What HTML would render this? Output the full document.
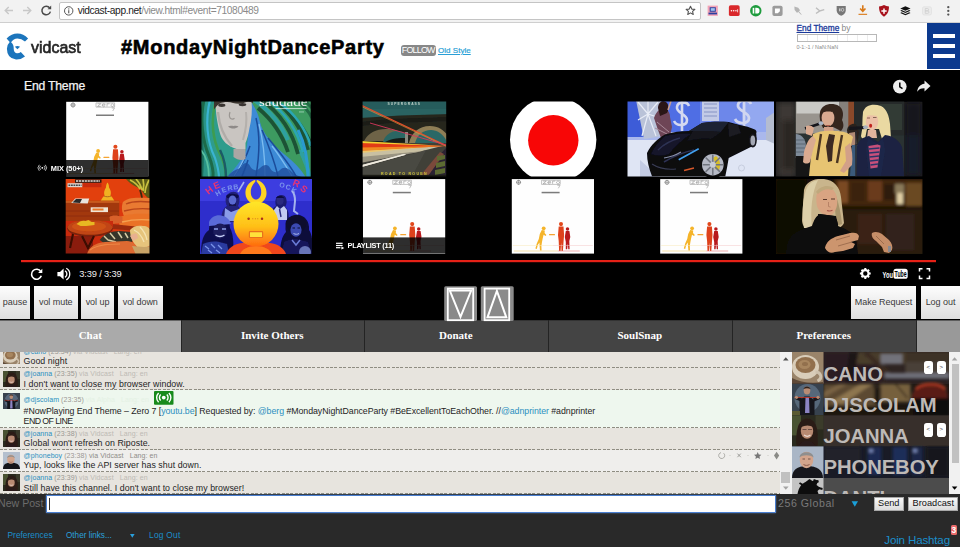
<!DOCTYPE html>
<html>
<head>
<meta charset="utf-8">
<style>
*{box-sizing:border-box;margin:0;padding:0}
html,body{width:960px;height:547px;overflow:hidden;background:#292929;font-family:"Liberation Sans",sans-serif;}
.abs{position:absolute}
svg{display:block;overflow:visible}
#root{position:absolute;left:0;top:0;width:960px;height:547px;overflow:hidden;background:#292929}
/* browser toolbar */
#tb{left:0;top:0;width:960px;height:23px;background:#f2f2f2;border-bottom:1px solid #cfcfcf}
#url{left:59px;top:2px;width:642px;height:18px;background:#fff;border:1px solid #c4c4c4;border-radius:2px}
#urlt{left:77.700px;top:2.500px;font-size:10.200px;line-height:16px;color:#8a8a8a;white-space:nowrap;letter-spacing:-.37px}
#urlt b{font-weight:normal;color:#222}
/* header */
#hd{left:0;top:23px;width:960px;height:47px;background:#fff}
#title{left:121px;top:34px;font-weight:bold;font-size:20px;line-height:26px;color:#000;white-space:nowrap;letter-spacing:.72px;-webkit-text-stroke:.6px #000}
#vid{left:0;top:70px;width:960px;height:250px;background:#000}
.tab{top:320px;height:32px;background:#444;color:#fff;font-family:"Liberation Serif",serif;font-weight:bold;font-size:11px;line-height:31.500px;text-align:center}
.btn{top:286px;height:33px;background:linear-gradient(#fdfdfd,#dedede);color:#3a3a3a;font-size:9px;line-height:33px;text-align:center;white-space:nowrap;letter-spacing:-.05px}
</style>
</head>
<body>
<div id="root">
<!-- ===== browser toolbar ===== -->
<div id="tb" class="abs"></div>
<svg class="abs" style="left:0;top:0" width="60" height="23" viewBox="0 0 60 23">
 <g fill="none" stroke="#c8c8c8" stroke-width="1.4">
  <path d="M13 10.5H5.2M8.7 7L5.2 10.5L8.7 14"/>
  <path d="M23 10.5H30.8M27.3 7L30.8 10.5L27.3 14"/>
 </g>
 <path d="M49.700 7.900A4.300 4.300 0 1 0 50.400 11.600" fill="none" stroke="#4a4a4a" stroke-width="1.500"/>
 <path d="M51.200 5.600V9.300H47.500Z" fill="#4a4a4a"/>
</svg>
<div id="url" class="abs"></div>
<svg class="abs" style="left:63px;top:5px" width="12" height="12" viewBox="0 0 12 12"><circle cx="5.700" cy="5.900" r="4.200" fill="none" stroke="#555" stroke-width="1"/><rect x="5.200" y="5.200" width="1.100" height="3.100" fill="#555"/><rect x="5.200" y="3.400" width="1.100" height="1.100" fill="#555"/></svg>
<div id="urlt" class="abs"><b>vidcast-app.net</b>/view.html#event=71080489</div>
<!-- star -->
<svg class="abs" style="left:685.300px;top:5.200px" width="11" height="11" viewBox="0 0 14 14"><path d="M7 1.6l1.65 3.6 3.9.4-2.9 2.6.85 3.8L7 10l-3.5 2 .85-3.8-2.9-2.6 3.9-.4z" fill="none" stroke="#555" stroke-width="1.400" stroke-linejoin="round"/></svg>
<!-- extension icons -->
<svg class="abs" style="left:704px;top:2px" width="256" height="19" viewBox="704 2 256 19">
 <g transform="translate(712.700 10.700) scale(.82) translate(-712.700 -10.700)"><rect x="706.500" y="4.500" width="12.500" height="12.500" fill="#f3a4b6"/><rect x="709" y="6.500" width="7.500" height="5.500" fill="#2a3fa0"/><rect x="710.300" y="7.600" width="5" height="3.200" fill="#9fc4ee"/><rect x="707.600" y="13" width="10.400" height="2.200" fill="#2a3fa0"/></g>
 <g transform="translate(734.300 10.700) scale(.86) translate(-734.300 -10.700)"><rect x="728" y="4.500" width="12.500" height="12.500" rx="2" fill="#d9282b"/><circle cx="731" cy="10.800" r=".9" fill="#fff"/><circle cx="733.600" cy="10.800" r=".9" fill="#fff"/><circle cx="736.200" cy="10.800" r=".9" fill="#fff"/><rect x="737.800" y="9" width=".9" height="3.600" fill="#fff"/></g>
 <g transform="translate(755.800 10.700) scale(.89) translate(-755.800 -10.700)"><circle cx="755.800" cy="10.700" r="6.400" fill="#1d9b3c"/><rect x="752.300" y="7.500" width="1.800" height="6.400" fill="#fff"/><path d="M755.200 7.500h1.600a3.200 3.200 0 0 1 0 6.400h-1.600z" fill="#fff"/></g>
 <g transform="translate(777.500 10.800) scale(.85) translate(-777.500 -10.800)"><rect x="771.500" y="4.800" width="12" height="12" rx="2.200" fill="#9b9b9b"/><path d="M774.500 8h5.800v3.200l-2.400 2.600h-3.400z" fill="#fff"/></g>
 <g transform="translate(798.400 10.700) scale(.92) translate(-798.400 -10.700)"><path d="M794 6.200l4.200 1.200 2.200 3-1.600.7 3.200 3.600-.7.500-3.300-3.400-1 1.400-2.700-3.200z" fill="#b5b5b5"/></g>
 <g transform="translate(820 10.700) scale(.85) translate(-820 -10.700)"><path d="M815.300 7.300l4.500 3.700 5.200-1.600M815.300 14l4.500-3" fill="none" stroke="#bdbdbd" stroke-width="1.700"/></g>
 <g transform="translate(841.200 10.900) scale(.8) translate(-841.200 -11.300)"><path d="M835.500 5.200h11.400v5.600c0 3.400-2.600 5.400-5.700 6.600-3.100-1.200-5.700-3.200-5.700-6.600z" fill="#777"/><rect x="838.700" y="8.200" width="1.500" height="3.600" fill="#ddd"/><rect x="841.500" y="8.200" width="2.800" height="3.600" rx="1.200" fill="none" stroke="#ddd" stroke-width=".9"/></g>
 <g transform="translate(862.800 10.500) scale(.86) translate(-862.800 -10.500)"><path d="M862.800 4.500v6.200M859.700 8.200l3.100 3.300 3.100-3.300" fill="none" stroke="#d97a1a" stroke-width="1.900"/><rect x="857.800" y="14.300" width="10" height="1.300" fill="#d97a1a"/></g>
 <g transform="translate(884 10.900) scale(.83) translate(-884 -10.600)"><path d="M878 5.400c2.300-.2 4.200-.8 6-1.800 1.800 1 3.700 1.600 6 1.800 0 5.800-1.600 9.800-6 12.100-4.400-2.300-6-6.300-6-12.100z" fill="#a8121c"/><path d="M883.100 7.600h1.800v2.300h2.300v1.800h-2.300v2.300h-1.800v-2.300h-2.300v-1.800h2.300z" fill="#fff"/></g>
 <g transform="translate(905.400 10.700) scale(.8) translate(-905.400 -10.300)" fill="#111"><path d="M905.400 4.600l6.400 2.900-6.400 2.900-6.400-2.900z"/><path d="M899 10.300l1.700-.8 4.700 2.100 4.700-2.100 1.700.8-6.400 2.900z"/><path d="M899 13.100l1.700-.8 4.700 2.100 4.700-2.100 1.700.8-6.400 2.900z"/></g>
 <g transform="translate(927 10.900) scale(.74) translate(-927 -10.800)"><rect x="921" y="5.300" width="12" height="11" rx="2" fill="#ececec" stroke="#dcdcdc" stroke-width=".8"/><path d="M924.600 7.600h3a1.600 1.600 0 0 1 0 3.200h-3zM924.600 10.800h3.400a1.650 1.650 0 0 1 0 3.300h-3.400z" fill="none" stroke="#cfcfcf" stroke-width="1.100"/></g>
 <g fill="#555"><circle cx="948.300" cy="7.200" r="1.150"/><circle cx="948.300" cy="10.900" r="1.150"/><circle cx="948.300" cy="14.600" r="1.150"/></g>
</svg>
<!-- ===== page header ===== -->
<div id="hd" class="abs"></div>
<svg class="abs" style="left:0;top:28px" width="34" height="38" viewBox="0 0 34 38">
 <path d="M6.600 10.400Q11.500 5.500 17.400 5.500Q23.500 5.500 28.100 10.400L25 13.500Q21.500 10.400 17.400 10.400Q13.500 10.600 11.100 14.200Q13.900 16.500 13.700 20.500Q13.700 24.500 16.700 25.300Q19 25.600 20.800 24L25 28.500Q21 31.800 16 31.600Q7 30.500 6.900 20.800Q7 16.500 9.700 13.900Z" fill="#1c75bc"/>
 <path d="M14.900 18.800Q17.400 17.300 20.100 18.800L17.400 21.300Z" fill="#1c75bc"/>
</svg>
<div class="abs" style="left:30.900px;top:36.800px;font-size:17px;line-height:22px;color:#262626;white-space:nowrap;transform:scaleX(.94);transform-origin:0 0;-webkit-text-stroke:.65px #262626;letter-spacing:0">vidcast</div>
<div id="title" class="abs">#MondayNightDanceParty</div>
<div class="abs" style="left:401px;top:45.300px;width:35.300px;height:10.500px;border-radius:3px;background:#888;color:#fff;font-size:8.900px;line-height:10.800px;text-align:center;letter-spacing:-.78px;text-indent:-.8px;overflow:hidden">FOLLOW</div>
<div class="abs" style="left:438px;top:44.700px;font-size:8px;line-height:11px;color:#2a9fd6;text-decoration:underline;white-space:nowrap;letter-spacing:.03px;-webkit-text-stroke:.2px #2a9fd6">Old Style</div>
<div class="abs" style="left:796.500px;top:22.500px;font-size:8.300px;line-height:11px;color:#8a8a8a;white-space:nowrap"><span style="color:#1b3a9a;text-decoration:underline;-webkit-text-stroke:.3px #1b3a9a">End Theme</span> <span style="font-size:8.600px">by</span></div>
<div class="abs" style="left:796.500px;top:33.500px;width:80.500px;height:8px;border:1px solid #b8b8b8;background:repeating-linear-gradient(90deg,#fff 0,#fff 9px,#ececec 9px,#ececec 10px)"></div>
<div class="abs" style="left:796.500px;top:44px;font-size:5.400px;line-height:7px;color:#8a8a8a;white-space:nowrap">0-1:-1 / NaN:NaN</div>
<div class="abs" style="left:927px;top:23px;width:33px;height:46px;background:#0c3a8e"></div>
<div class="abs" style="left:932.500px;top:34.400px;width:22.500px;height:4.100px;background:#fff"></div>
<div class="abs" style="left:932.500px;top:44.300px;width:22.500px;height:4.100px;background:#fff"></div>
<div class="abs" style="left:932.500px;top:54px;width:22.500px;height:4.100px;background:#fff"></div>
<!-- ===== video area ===== -->
<div id="vid" class="abs"></div>
<svg class="abs" style="left:0;top:70px" width="960" height="250" viewBox="0 70 960 250">
<defs>
 <filter id="b1" x="-5%" y="-5%" width="110%" height="110%"><feGaussianBlur stdDeviation=".7"/></filter>
 <filter id="b2" x="-5%" y="-5%" width="110%" height="110%"><feGaussianBlur stdDeviation="1.400"/></filter>
 <filter id="b3" x="-10%" y="-10%" width="120%" height="120%"><feGaussianBlur stdDeviation="3"/></filter>
 <g id="alb">
  <rect width="82.200" height="74.500" fill="#fefefe"/>
  <circle cx="6.800" cy="3.200" r="2" fill="none" stroke="#555" stroke-width=".55"/><path d="M6.800 .8v4.800M4.400 3.200h4.800" stroke="#555" stroke-width=".45"/>
  <path d="M29.800 1.100h18.600v4.200h-18.600z" fill="none" stroke="#9a9a9a" stroke-width=".6"/>
  <path d="M31.300 2h3.200l-3.200 2.600h3.200M36 3.300h3a1.500 1.400 0 1 0-.4 1.100M40.800 4.700v-2.700h2.600M46.200 2a1.450 1.350 0 1 0 .01 0z" fill="none" stroke="#8a8a8a" stroke-width=".55"/>
  <path d="M45.500 6.200h2.800l-1.800 3" fill="none" stroke="#999" stroke-width=".6"/>
  <rect x="29.800" y="12.700" width="18" height="1.500" fill="#2a2a2a" opacity=".62"/>
  <circle cx="31.900" cy="49.200" r="1.900" fill="#f5b42a"/>
  <path d="M30 51L33 51.500L32.800 54L34.600 56L33.800 56.900L31.800 55.600L31 59L30.200 63L29.600 67L29.800 71.500L28.200 71.500L27.800 67L27.600 63.500L26 66L25 69.800L23.600 69.300L25 64.500L27 60L28 55z" fill="#f5b42a"/>
  <rect x="37.200" y="54.900" width="6" height="1.200" rx=".5" fill="#f5a432"/>
  <circle cx="49.200" cy="45" r="2.050" fill="#e2481c"/>
  <path d="M46.900 47.400L51.700 47.400L52.300 56L51.800 62L51.100 71.800L49.700 71.800L49.400 63.500L48.800 71.800L47.300 71.800L46.900 62L46.200 56z" fill="#de421c"/>
  <circle cx="55.700" cy="50" r="1.750" fill="#b8191c"/>
  <path d="M54 52L57.600 52L58.500 58L57.500 62L57.800 70.200L56.500 70.200L56 64.500L55.400 70.200L54 70.200L54 63L53 58z" fill="#b8191c"/>
  <rect x="1" y="66.300" width="40" height=".5" fill="#f8e8b8"/><rect x="41" y="66.300" width="40" height=".5" fill="#f4c8c8"/>
  <rect x="2" y="71.600" width="44" height=".6" fill="#f4d070"/><rect x="46" y="71.600" width="22" height=".6" fill="#e87a7a"/>
 </g>
 <clipPath id="c2"><rect x="201.500" y="101.500" width="109.200" height="75"/></clipPath>
 <clipPath id="c3"><rect x="362.600" y="101.500" width="83.600" height="75"/></clipPath>
 <clipPath id="c4"><rect x="505" y="101.500" width="98" height="75"/></clipPath>
 <clipPath id="c5"><rect x="627.500" y="101.500" width="146.500" height="75"/></clipPath>
 <clipPath id="c6"><rect x="776" y="101.500" width="146.500" height="75"/></clipPath>
 <clipPath id="c7"><rect x="65.700" y="179" width="83.800" height="74.400"/></clipPath>
 <clipPath id="c8"><rect x="200.800" y="179" width="110.400" height="74.300"/></clipPath>
 <clipPath id="c12"><rect x="776" y="179" width="146.500" height="75"/></clipPath>
 <linearGradient id="gmask" x1="0" y1="0" x2="0" y2="1"><stop offset="0" stop-color="#ffe628"/><stop offset=".55" stop-color="#ffc018"/><stop offset="1" stop-color="#ff6a10"/></linearGradient>
 <linearGradient id="groad" x1="0" y1="0" x2="1" y2="0"><stop offset="0" stop-color="#b8b09a"/><stop offset="1" stop-color="#6a6a5c"/></linearGradient>
</defs>
<!-- title -->
<text x="24" y="90.300" font-family="Liberation Sans, sans-serif" font-size="12.200" fill="#f4f4f4" stroke="#f4f4f4" stroke-width=".25" letter-spacing="-.2">End Theme</text>
<!-- clock & share -->
<circle cx="899.800" cy="86.600" r="6.800" fill="#eee"/><path d="M899.800 82.600v4.300l2.700 1.700" fill="none" stroke="#000" stroke-width="1.500"/>
<path d="M924.500 80.600l6 5.400-6 5.400v-3.200c-3.600-.1-5.600 1-7.300 3.500.5-4.300 2.600-7.300 7.300-8z" fill="#eee"/>

<!-- ROW 1 -->
<use href="#alb" x="66.200" y="101.800"/>
<rect x="33.500" y="160" width="115" height="16.500" fill="#000" opacity=".82"/>
<!-- thumb 2 saudade -->
<g clip-path="url(#c2)"><g filter="url(#b1)">
 <rect x="199" y="99" width="114" height="80" fill="#2f9c8c"/>
 <!-- left swirls -->
 <path d="M199 99h18c-8 14-10 34-4 52 3 9 8 16 8 28h-22z" fill="#2a9486"/>
 <path d="M199 120c4 14 6 30 4 58h-4z" fill="#1c6a58"/>
 <path d="M204 100c-4 18-2 40 5 56 3 8 5 14 4 22" fill="none" stroke="#1d6a4a" stroke-width="3"/>
 <path d="M210 100c-5 20-3 42 5 58 2 6 4 12 4 20" fill="none" stroke="#3ab4d2" stroke-width="2.200"/>
 <path d="M215 104c-4 18-2 36 5 50 3 6 6 14 6 24" fill="none" stroke="#3e9c50" stroke-width="2.600"/>
 <path d="M201 150c5 6 8 16 8 28" fill="none" stroke="#58c0a0" stroke-width="1.800"/>
 <path d="M220 150c4 8 6 16 6 28" fill="none" stroke="#1a5a66" stroke-width="2.400"/>
 <!-- right green area -->
 <rect x="248" y="99" width="66" height="80" fill="#3c9a60"/>
 <path d="M254 100c12 8 26 22 34 40M300 150c4 8 8 18 10 28" fill="none" stroke="#2fa0a0" stroke-width="4"/>
 <path d="M262 100c16 12 30 30 36 54M274 100c16 12 28 28 34 50M288 112c10 8 18 20 24 34M258 108c12 10 24 26 30 44" fill="none" stroke="#1d5236" stroke-width="3.800"/>
 <path d="M268 100c16 12 29 29 35 52M281 104c14 10 24 24 30 42" fill="none" stroke="#2aa6b4" stroke-width="2.600"/>
 <path d="M298 130c6 12 10 28 10 48" fill="none" stroke="#2a9ad0" stroke-width="3"/>
 <path d="M296 100c6 4 12 10 16 18M304 100l8 8" fill="none" stroke="#226a44" stroke-width="3"/>
 <!-- blue hair bell -->
 <path d="M250 100c4 6 8 12 10 22 3 12 12 22 24 32 10 8 18 16 22 24h-80c8-8 16-18 20-28 3-10 2-30 4-50z" fill="#3c8ad6"/>
 <path d="M256 118c4 16 4 34 0 58M262 130c6 14 12 30 16 46M268 138c10 12 20 24 28 38M250 146c-4 12-10 22-16 30M248 160c-2 6-4 12-6 16" fill="none" stroke="#1c4c9a" stroke-width="1.500"/>
 <path d="M259 124c4 16 6 34 6 52M272 146c8 10 14 20 20 30M245 156c-3 8-7 14-11 20" fill="none" stroke="#7cbcf0" stroke-width="1.300"/>
 <path d="M228 176c6-8 12-6 14-10s6-4 8 0 6 6 10 2 8-4 10 0 6 6 10 2 8-2 12 2 8 4 12 6v2z" fill="#1f4e9c" opacity=".8"/>
 <!-- face -->
 <path d="M215.500 100h36c1 10 0 20-2 28-1 6-2 10-4 15v6h-9c-9-3-14-8-16-14-3-10-5-22-5-35z" fill="#c9c5c1"/>
 <path d="M233.500 149h12v10c-4 2-8 1-12-2z" fill="#aaa6a4"/>
 <path d="M214 99h39v4c-3-1.500-6-1.500-8-.5-3 1.500-8 1.500-12 .5-4-1.500-10-1-13 .5-2 1-4 3-6 6z" fill="#3a352f"/>
 <ellipse cx="221.800" cy="105.200" rx="3.600" ry="1.700" fill="#3a3632"/><ellipse cx="242.500" cy="104.600" rx="3.800" ry="1.700" fill="#3a3632"/>
 <path d="M230 112c-1 3-1 5 .5 6.500 1.500.8 3 .6 4-.2" fill="none" stroke="#9a9692" stroke-width="1.200"/>
 <path d="M228 126.500c2-1.200 4-.8 5.500-.4 1.500-.6 3.500-.6 5 .4-1.600 1.600-3.400 2-5 2-2 0-4-.6-5.500-2z" fill="#8e8a88"/>
 <path d="M218 112c1 12 5 24 14 34" fill="none" stroke="#b0aca8" stroke-width="2.400"/>
 <path d="M246 112c1 8 0 18-3 28" fill="none" stroke="#b4b0ac" stroke-width="2"/>
 <!-- text -->
 <text x="259" y="106" font-family="Liberation Serif, serif" font-size="11.500" fill="#f4f4f4" textLength="48.500" lengthAdjust="spacingAndGlyphs">saudade</text>
 <rect x="275.500" y="108" width="31" height="1.100" fill="#e4f4ee" opacity=".7"/><rect x="299" y="111.500" width="5" height=".9" fill="#e4f4ee" opacity=".6"/>
</g></g>
<!-- thumb 3 supergrass -->
<g clip-path="url(#c3)"><g filter="url(#b1)">
 <rect x="360" y="99" width="90" height="80" fill="#2a6462"/>
 <rect x="360" y="99" width="90" height="10" fill="#255c5c"/>
 <!-- bridge mass -->
 <path d="M360 118l40-2.500 50-1.500v36h-90z" fill="#26261e"/>
 <path d="M360 122l30-3 60-2v4l-60 2-30 3z" fill="#1a1c18"/>
 <!-- left arch -->
 <path d="M364 141c4-8 12-12 22-12 8 0 14 2 20 6v6z" fill="#6e6446"/>
 <path d="M383 142c2-7 8-11 14-11 4 0 7 1 9 3v8z" fill="#2a6664"/>
 <path d="M385 142h21v-4c-6 0-14 0-21 4z" fill="#151a18"/>
 <!-- right arch -->
 <path d="M409 143c2-10 10-17 21-17 8 0 14 4 18 10v7z" fill="#8e7e56"/>
 <path d="M415 143c2-8 8-13 16-13 6 0 12 4 15 10v3z" fill="#2a6866"/>
 <rect x="405" y="132" width="3" height="11" fill="#8a8a80"/>
 <!-- road -->
 <rect x="360" y="143" width="90" height="36" fill="#403f39"/>
 <path d="M360 150l82-4-24 6-58 6z" fill="#c9c0a2"/>
 <path d="M360 157l64-6-64 12z" fill="#9a9482"/>
 <path d="M360 165.500l44-11.500 2 .8-46 12.700z" fill="#eeeade"/>
 <path d="M360 168l60-16 6-2-14 26h-52z" fill="#4c4b44" opacity=".85"/>
 <path d="M360 165.500l44-11.500 2 .8-46 12.700z" fill="#eeeade" opacity=".9"/>
 <!-- kerb right -->
 <path d="M446 148l-26 28h30v-28z" fill="#2a2230"/>
 <path d="M440 152l-20 24h8l16-22z" fill="#7a4a3a"/>
 <path d="M437 156l8-1v4l-8 2zM436 163l9-2v5l-9 2zM435 170l10-2v5l-10 2z" fill="#5c6a30"/>
 <!-- trail band -->
 <path d="M360 141.500l86 4.500-86 5z" fill="#e23a18"/>
 <path d="M360 141l86 5-86-3z" fill="#f2d232"/>
 <path d="M360 147.500l86-1.500-86 5z" fill="#f08a22"/>
 <path d="M360 151l70-4-70 6z" fill="#f6c860" opacity=".8"/>
 <!-- diagonal trails -->
 <path d="M362 105.500l84 40" stroke="#ea4c2a" stroke-width="1.300"/><path d="M362 106.800l84 39.500" stroke="#f09a3a" stroke-width=".6"/>
 <path d="M370 123l76 22" stroke="#d8385a" stroke-width=".9"/>
 <rect x="360" y="174.800" width="90" height="5" fill="#1c1c18"/>
 <text x="381" y="175" font-family="Liberation Sans, sans-serif" font-weight="bold" font-size="3.600" fill="#d2c63a" letter-spacing="1.250">ROAD TO ROUEN</text>
 <text x="387.500" y="105" font-family="Liberation Sans, sans-serif" font-weight="bold" font-size="3.300" fill="#c4d4cc" letter-spacing="1.050">SUPERGRASS</text>
</g></g>
<!-- thumb 4 circle -->
<g clip-path="url(#c4)"><circle cx="553.200" cy="139.700" r="43.200" fill="#fff"/><circle cx="553.300" cy="140.300" r="25.200" fill="#f80606"/></g>
<!-- thumb 5 car -->
<g clip-path="url(#c5)"><g filter="url(#b1)">
 <rect x="625" y="99" width="152" height="80" fill="#dfe5f4"/>
 <rect x="625" y="99" width="152" height="36" fill="#4f6ee4"/>
 <rect x="700" y="99" width="77" height="36" fill="#6d87ea"/>
 <rect x="745" y="99" width="32" height="38" fill="#93a8f0"/>
 <path d="M625 132h152v8h-152z" fill="#aab8ec"/>
 <path d="M625 99h11l8 38h-19z" fill="#3e5cd8"/>
 <!-- sunburst panel -->
 <path d="M636 100h25l2 36-19 3z" fill="#b9c2d8"/>
 <path d="M648 114l-10-12M648 114l0-14M648 114l10-12M648 114l-10 6M648 114l12 4M648 114l-6 22M648 114l8 22" stroke="#e8ecf6" stroke-width="1.200"/>
 <!-- $ signs & panels -->
 <path d="M689 106c-2-5-11-5-12 1s10 7 10 13-10 7-13 1M682 101v30" fill="none" stroke="#d4d9f0" stroke-width="2.600"/>
 <rect x="702" y="100" width="17" height="21" fill="#c3cbe6"/><path d="M704 104h13M704 108h13M704 112h13M704 116h13" stroke="#9aa6d0" stroke-width="1.500"/>
 <path d="M751 104c-2-5-12-5-13 1s11 7 11 13-11 7-14 1M744 100v28" fill="none" stroke="#d0d6f0" stroke-width="2.800"/>
 <path d="M766 118l9-6v32l-9-4z" fill="#b4bcd0"/>
 <!-- woman -->
 <path d="M654 118c2-6 6-10 10-9 4 0 6 4 6 8l2 10-2 9-9 2-3-8z" fill="#6e4456"/>
 <path d="M658 108c0-5 4-8 8-6 3 2 3 7 1 11l-7 3z" fill="#2a1418"/>
 <path d="M668 110l3-9" stroke="#c8a090" stroke-width="1.600"/>
 <path d="M657 122l12 10M655 128l12 6" stroke="#a88a98" stroke-width="1"/>
 <!-- floor shadows -->
 <path d="M640 160l20 18h-20z" fill="#c4cce4"/>
 <!-- car -->
 <path d="M647 153c4-8 10-14 18-18.500 8-2.500 16-3.500 24-3.500l13-8c8-1.500 18-1.500 26.700-1l10 2.700c6 1 12 2.700 16.600 5 1.500 1.500 1.500 3 .9 3.300 .5 4 .2 8-.9 11.700l-26.600 13.300c-1 6-2 12-3.400 18.300h-73.300c-3-8-5-15-5-23.300z" fill="#0a0a10"/>
 <path d="M689 131l13-8c8-1.500 18-1.500 26.700-1l-8 10c-10-1-21-1-31.700-1z" fill="#1e2230"/>
 <path d="M693 131c10 0 20 0 28 1l-10 7c-8-1-16 0-24 2z" fill="#14161e"/>
 <path d="M728 123l10 2 3 8-12 4z" fill="#1a1a22"/>
 <path d="M665 136c8-2 18-3 26-2-8 5-16 12-22 20-6 2-12 2-18 0 3-7 8-13 14-18z" fill="#14142a"/>
 <path d="M658 150c6-6 14-10 22-12M664 162c10-6 20-10 30-12" fill="none" stroke="#2e3252" stroke-width="1.600"/>
 <path d="M678.700 159.700l20-11" stroke="#43a2f0" stroke-width="1.700"/>
 <path d="M664 158c6-1 12-3 17-6" stroke="#8a90a8" stroke-width="1.200" fill="none"/>
 <path d="M684 170.500l10-2.500" stroke="#d85a2a" stroke-width="1.300"/>
 <path d="M652 164c6 4 14 6 24 5" stroke="#3a3e52" stroke-width="1.200" fill="none"/>
 <circle cx="712.800" cy="164.700" r="13.500" fill="#0c0c10"/>
 <circle cx="712.800" cy="164.700" r="10.800" fill="#b4b8c4"/>
 <path d="M716 156c4 3 5 9 3 14l-4-1c1-4 0-8-2-11z" fill="#d8be28"/>
 <path d="M712.800 154.500v20.400M702.600 164.700h20.400M705.600 157.500l14.400 14.400M720 157.500l-14.400 14.400" stroke="#70747e" stroke-width="1.500"/>
 <circle cx="712.800" cy="164.700" r="3" fill="#c8ccd4"/>
 <ellipse cx="752.800" cy="140.500" rx="4" ry="7" fill="#14141a"/><ellipse cx="752.800" cy="140.500" rx="2.400" ry="5" fill="#a4a8b4"/>
 <circle cx="741.500" cy="168" r="3" fill="none" stroke="#c0c6d8" stroke-width=".8"/>
</g></g>
<!-- thumb 6 singers -->
<g clip-path="url(#c6)">
 <rect x="776" y="101.500" width="146.500" height="75" fill="#1b1a1c"/>
 <g filter="url(#b3)"><rect x="777" y="102" width="19" height="75" fill="#3d3834"/><rect x="782" y="120" width="12" height="50" fill="#2a2522"/><rect x="905" y="102" width="17" height="75" fill="#17181e"/><rect x="906" y="135" width="14" height="40" fill="#141a2c"/></g>
 <g filter="url(#b1)">
 <rect x="795.800" y="101.500" width="108.400" height="75" fill="#2b3030"/>
 <rect x="795.800" y="101.500" width="53" height="32" fill="#98948e"/>
 <rect x="796.500" y="101.500" width="42.500" height="12" fill="#c9c9c5"/>
 <rect x="839" y="101.500" width="9" height="30" fill="#85817c"/>
 <rect x="848.300" y="101.500" width="5.800" height="32" fill="#8a4a2c"/>
 <rect x="854" y="101.500" width="50" height="34" fill="#262c2c"/><rect x="880" y="104" width="22" height="26" fill="#303a36"/>
 <!-- bg person left -->
 <path d="M795.800 134c5 0 9 4 10 10v14h-10z" fill="#7f8c9a"/><path d="M796 140h9M796 144h9.500M796 148h10M796 152h10" stroke="#5c6874" stroke-width="1.200"/>
 <rect x="795.800" y="156" width="18" height="21" fill="#171717"/>
 <!-- bg person middle -->
 <path d="M847 130c1-5 5-7 9-6l3 8-2 14-8 2z" fill="#2a221e"/><path d="M849 133l6-1 2 12-6 2z" fill="#b08a74"/>
 <path d="M852 145h6v31h-8z" fill="#3a5a7a"/>
 <!-- woman 1 -->
 <path d="M820 112c2-8 12-10 19-6 4 3 5 8 3 14 2 4 2 8-1 11l-8-4-10 1c-3-5-4-11-3-16z" fill="#35261f"/>
 <ellipse cx="828" cy="118" rx="6.400" ry="8.400" fill="#d9aa90"/>
 <path d="M821 113c2-4 8-6 13-4l-2 3c-4-1-8 0-11 1z" fill="#35261f"/>
 <path d="M826 125.500h4" stroke="#a85a4a" stroke-width="1"/>
 <path d="M824 127h9l1 6h-10z" fill="#d2a088"/>
 <path d="M813 134c6-3 14-4 22-3 8 0 14 2 18 6l-3 12-2 27h-39l2-20z" fill="#e7c472"/>
 <path d="M821 134l-4 26M842 135l-5 28" stroke="#4a3422" stroke-width="2.400"/>
 <path d="M829 134l-3 12 2 16 4-1 1-15 2-11z" fill="#3a2a20"/>
 <path d="M813 136c-4 2-7 8-9 16l-1 10c2 2 5 2 7 0l3-12 3-10z" fill="#d9aa90"/>
 <path d="M850 143c2 6 3 14 2 22l-8 8-4-2 6-10-1-14z" fill="#d2a088"/>
 <path d="M805 128.500l17-5.500" stroke="#15151a" stroke-width="2.800"/><ellipse cx="821" cy="123.200" rx="2.400" ry="1.900" fill="#a8b4c4"/>
 <path d="M806 126c2-1 6-1 8 2l-2 8-6-2z" fill="#d9aa90"/>
 <!-- woman 2 -->
 <path d="M863 112c2-7 10-9 18-6 6 3 8 10 9 18l1 14c-3 2-6 2-9 1l-3-10h-12l-2 10c-2 0-4-1-4-3 2-8 1-16 2-24z" fill="#ead9a2"/>
 <ellipse cx="872" cy="121.500" rx="6.200" ry="8.800" fill="#ebbfa6"/>
 <path d="M864 116c3-5 10-7 16-4l-3 4c-4-1-9-1-13 0z" fill="#ead9a2"/>
 <ellipse cx="870.600" cy="125.700" rx="1.500" ry="2" fill="#c0201c"/>
 <path d="M867 118h3M873 117.500h3.500" stroke="#7a5a4a" stroke-width=".9"/>
 <path d="M868 130h8l1 8h-10z" fill="#e2b49c"/>
 <path d="M857 146c2-6 6-9 12-10l9 6 7-7c8 1 14 5 17 12l2 29h-48z" fill="#1a2242"/>
 <path d="M868 138l9 6 6-6 2 12-4 26h-12l-3-26z" fill="#1f2748"/>
 <path d="M868.500 146l9-1.500 3 1-3 22-7 1z" fill="#c8507a"/>
 <path d="M868.500 149l11-1M869 153l10.500-1M869.500 157l9.500-1M870 161l8.500-1M870.500 165l7.500-1" stroke="#2a3468" stroke-width="1.500"/>
 <path d="M849 128.500l17-1" stroke="#15151a" stroke-width="2.800"/><ellipse cx="865.500" cy="127.300" rx="2.500" ry="2" fill="#a8b0bc"/>
 <path d="M856 131v46" stroke="#2a2a2e" stroke-width="1.500"/>
 </g>
</g>

<!-- ROW 2 -->
<!-- thumb 7 orange room -->
<g clip-path="url(#c7)"><g filter="url(#b1)">
 <rect x="63" y="177" width="90" height="80" fill="#dc3810"/>
 <rect x="63" y="177" width="90" height="26" fill="#e2400f"/>
 <!-- label -->
 <rect x="75" y="179.300" width="26.500" height="3.500" fill="#2a1a14"/><path d="M76 181h24" stroke="#e8e0d8" stroke-width="1.600" stroke-dasharray="2.200 .7"/>
 <rect x="67.500" y="183.200" width="15" height="4" fill="#d8d4d0"/><path d="M68.500 185.200h13" stroke="#444" stroke-width="1.600" stroke-dasharray="1.800 .7"/>
 <rect x="82.500" y="183.200" width="19" height="4" fill="#c82c10"/>
 <!-- buddha -->
 <path d="M100.500 201.500c1-3 3-5 4-6-1-3 0-6 1.500-8 0-2 .5-4 1.500-5 1 1 1.500 3 1.500 5 1.500 2 2.500 5 1.500 8 1 1 3 3 4 6z" fill="#f0b222"/>
 <path d="M104 196c2 1 5 1 7 0" stroke="#a8621a" stroke-width=".9" fill="none"/>
 <!-- plant -->
 <path d="M126 179h24v20c-4-2-7-6-9-10-4-2-10-4-15-10z" fill="#5a5a14"/>
 <path d="M130 180c4 2 8 5 10 9M136 179c3 3 5 7 6 11M143 179c1 4 1 8 0 12M149 180c-2 4-4 8-4 13" stroke="#c8c040" stroke-width="1.700" fill="none"/>
 <path d="M140 190c1 3 2 6 2 9" stroke="#3a2a0c" stroke-width="1.800"/>
 <!-- sideboard -->
 <rect x="65" y="200.700" width="54.300" height="20.500" fill="#a2380f"/>
 <rect x="65" y="200.700" width="54.300" height="2.200" fill="#c85a1c"/>
 <path d="M65 211h54M65 216h54" stroke="#8a2c0c" stroke-width=".8"/>
 <path d="M71.200 203l4-4.500h14l-1.500 5z" fill="#e8e4dc"/><path d="M72.500 202.500l3.500-3.500h6l-2 4z" fill="#2a2a2a"/>
 <rect x="90.700" y="207.300" width="17.300" height="4.800" fill="#efe6d6"/><rect x="92.500" y="208.500" width="11" height="2" fill="#e8782a"/>
 <!-- sofa -->
 <path d="M123 202c4-4 10-5 27-4v17l-26 1c-2-4-3-9-1-14z" fill="#e97a30"/>
 <path d="M126 204c6-3 14-3 24-2M124 211c8-2 16-3 26-2" stroke="#b8441a" stroke-width="1.300" fill="none"/>
 <path d="M120 217c6-3 16-4 30-3v14l-28 1c-3-3-4-8-2-12z" fill="#ea7228"/>
 <path d="M109.500 217c2-2 8-2 13 0v6l-12 1z" fill="#d8602a"/>
 <path d="M122 222c8-2 18-3 28-2" stroke="#f4a050" stroke-width="1.400" fill="none"/>
 <path d="M112 224l38 4v4l-38-3z" fill="#9a2c0e"/>
 <!-- floor -->
 <rect x="63" y="221" width="50" height="36" fill="#c92c0e"/>
 <rect x="63" y="236" width="30" height="20" fill="#8a1c0a"/>
 <!-- table -->
 <ellipse cx="90" cy="228.500" rx="22.800" ry="8.200" fill="#7a2009"/>
 <ellipse cx="90" cy="227.300" rx="22.500" ry="7.400" fill="#c04412"/>
 <ellipse cx="89" cy="226.500" rx="17" ry="4.800" fill="#cf5218"/>
 <path d="M76.500 224c3-3 6-4 9-3l3-1 3 2 3 0v3l-8 1-6 0z" fill="#e8b820"/>
 <path d="M73 234l-3 14M107 234l3 10M82 236l6 12 6-12" stroke="#3c1006" stroke-width="2.200" fill="none"/>
 <!-- person -->
 <path d="M99.700 240c4-6 12-9 20-9l12 1 4 6-6 6-22 2z" fill="#35352a"/>
 <path d="M104 236l4 4M110 233l5 6M118 232l4 6M125 233l3 5M108 240l8 2" stroke="#d8cca4" stroke-width="1.500"/>
 <path d="M130 230c3-4 8-5 13-4 4 0 7 2 8 5v14c-4 3-10 4-14 2-4-4-7-10-7-17z" fill="#e6c47c"/>
 <path d="M134 230c4 2 8 6 10 12M140 227c3 3 6 8 7 13" stroke="#f4e2b0" stroke-width="1.300" fill="none"/>
 <path d="M130 236c2-2 5-3 7-2l1 4-5 3z" fill="#e8b090"/>
 <!-- fg chair -->
 <path d="M87 254c2-7 8-11 18-12l22-1c6 0 10 4 11 9v5h-51z" fill="#de6a30"/>
 <path d="M90 250c6-5 16-6 30-6" stroke="#f08a48" stroke-width="1.200" fill="none"/>
 <path d="M132 246c6 0 12 2 18 0v9h-14z" fill="#c8a468"/>
</g></g>
<!-- thumb 8 headhunters -->
<g clip-path="url(#c8)"><g filter="url(#b1)">
 <rect x="198" y="177" width="116" height="80" fill="#2e2ecc"/>
 <rect x="198" y="177" width="116" height="24" fill="#3d3de0"/>
 <!-- letters -->
 <g font-family="Liberation Sans, sans-serif" font-weight="bold" font-size="9.500" fill="#e83474">
  <text transform="translate(208.500 195) rotate(-38)">H</text><text transform="translate(215 189.500) rotate(-22)">E</text>
  <text transform="translate(292 185) rotate(22)">R</text><text transform="translate(299.500 189.500) rotate(38)">S</text>
 </g>
 <g font-family="Liberation Sans, sans-serif" font-weight="bold" font-size="7" fill="#7c94ec">
  <text transform="translate(217 196.500) rotate(-30)">H</text><text transform="translate(222.500 193) rotate(-20)">E</text><text transform="translate(228 190.800) rotate(-12)">R</text><text transform="translate(233.500 189.500) rotate(-6)">B</text>
  <text transform="translate(279 187) rotate(10)">O</text><text transform="translate(285 188.500) rotate(20)">C</text><text transform="translate(290.500 191) rotate(30)">K</text>
 </g>
 <!-- left top man -->
 <path d="M221 222c0-8 2-14 6-16-2-4-2-9 1-12 3-3 8-3 10 0 2 3 2 8 0 12 3 3 4 8 4 16z" fill="#20207a"/>
 <path d="M226 196c2-3 10-3 13 0l-1 2h-11z" fill="#10104a"/>
 <ellipse cx="232.500" cy="200" rx="3.800" ry="4.600" fill="#5a6ad0"/>
 <path d="M229 203c2 2.500 5 2.500 7 0v3h-7z" fill="#141450"/>
 <path d="M225 208l6 4 8-3 1 12h-16z" fill="#8a9ce8"/>
 <path d="M238 192l6-10" stroke="#a8b4ee" stroke-width="1.600"/>
 <!-- left bottom man -->
 <path d="M201 254c0-12 2-20 8-24 0-8 4-14 11-14 6 0 10 5 10 12 3 5 4 14 3 26z" fill="#10104e"/>
 <path d="M209 222c2-5 8-8 14-6 4 1 7 4 8 8l-22 2z" fill="#5a6ad8"/>
 <ellipse cx="220" cy="231" rx="7" ry="7.500" fill="#1a1a5c"/>
 <path d="M214 229h4M222 229h4" stroke="#8a9ce8" stroke-width="1.300"/><path d="M215.500 235c3 2 6 2 9 0" stroke="#c8d0f8" stroke-width="1.500" fill="none"/>
 <path d="M203 244c4-2 10-3 16-2l8 2 2 10h-28z" fill="#2a3aa0"/>
 <path d="M205 246l4 3M211 244l4 4M218 245l4 4M208 250l4 3M216 250l4 3" stroke="#7a94e8" stroke-width="1.300"/>
 <!-- right top man -->
 <path d="M270 220c0-7 2-12 6-14-1-4-1-8 2-10 3-2 7-1 8 2 1 3 1 6-1 9 3 2 4 6 4 13z" fill="#1c1c70"/>
 <ellipse cx="280" cy="200.500" rx="3.600" ry="4.400" fill="#2a2a80"/>
 <path d="M277 206l3 3 4-3 3 4v10h-13v-10z" fill="#c2caf2"/><path d="M279.500 209l1.500 8" stroke="#2a2a80" stroke-width="1.400"/>
 <path d="M276 198c2-3 6-3 8 0z" fill="#0c0c40"/>
 <!-- sax -->
 <path d="M292 191c2 2 3 6 3 10l-1 10 4 3" stroke="#a4b2ee" stroke-width="2" fill="none"/>
 <!-- right bottom man -->
 <path d="M280 254c0-10 2-18 6-22-2-8 2-16 10-17 8-1 14 6 13 15 3 4 4 12 4 24z" fill="#0c0c3a"/>
 <ellipse cx="296" cy="224" rx="10.500" ry="9" fill="#0a0a2e"/>
 <ellipse cx="296" cy="230" rx="5.600" ry="6.800" fill="#3a4ab0"/>
 <path d="M292.500 228h2.500M297.500 228h2.500" stroke="#0a0a30" stroke-width="1.100"/><path d="M293.500 233.500c2 1 4 1 5.500 0" stroke="#b0bcf0" stroke-width="1" fill="none"/>
 <path d="M284 242c4-2 8-3 12-3l12 3 3 12h-29z" fill="#18185a"/>
 <path d="M292 240l4 5 4-5" stroke="#6a7cd8" stroke-width="1.500" fill="none"/>
 <circle cx="305" cy="252" r="6" fill="#8a9ce0" opacity=".7"/>
 <!-- body -->
 <path d="M226 254c2-6 8-10 16-11h28c8 1 14 5 16 11z" fill="#f0461a"/>
 <path d="M240 254c2-5 8-8 16-8s14 3 16 8z" fill="#ff7a1a"/>
 <!-- horns -->
 <path d="M254.500 180c-6 2-9.500 8-9 14 .5 6 5 10 10.500 10s10-4 10.500-10c.5-6-3-12-9-14-1 0-1.500 1-.5 2 3 3 4.700 7 4.200 11-.4 4-2.500 6.500-5.200 6.500s-4.800-2.500-5.200-6.500c-.5-4 1.200-8 4.200-11 1-1 .5-2-.5-2z" fill="#ffd420"/>
 <!-- mask -->
 <circle cx="256" cy="224" r="22.500" fill="url(#gmask)"/>
 <circle cx="248.600" cy="218.800" r="1.250" fill="#a8301a"/><circle cx="262" cy="218.800" r="1.250" fill="#a8301a"/>
 <circle cx="252.800" cy="218.800" r=".5" fill="#c8601a"/><circle cx="255.300" cy="218.800" r=".5" fill="#c8601a"/><circle cx="257.800" cy="218.800" r=".5" fill="#c8601a"/>
 <rect x="249.400" y="231.700" width="13.200" height="5.800" rx=".8" fill="#ffe23a" stroke="#e8701a" stroke-width="1.200"/>
</g></g>
<use href="#alb" x="363" y="179.100"/>
<rect x="330.500" y="237.400" width="115.700" height="15.900" fill="#000" opacity=".82"/>
<use href="#alb" x="511.800" y="179.100"/>
<use href="#alb" x="660.200" y="179.100"/>
<!-- thumb 12 woman -->
<g clip-path="url(#c12)"><g filter="url(#b1)">
 <rect x="774" y="177" width="152" height="80" fill="#170d08"/>
 <g filter="url(#b2)">
 <rect x="776" y="179" width="30" height="75" fill="#0c0705"/>
 <rect x="834" y="179" width="90" height="27" fill="#43250f"/>
 <rect x="838" y="181" width="10" height="22" fill="#7a4a24"/><rect x="852" y="183" width="12" height="18" fill="#3a2010"/><rect x="868" y="181" width="14" height="20" fill="#6a3a1c"/><rect x="884" y="184" width="10" height="16" fill="#2e1a0e"/>
 <rect x="906" y="183" width="16" height="24" fill="#6a4a22"/>
 <rect x="897" y="192" width="6" height="12" fill="#e0cfa4"/><rect x="895" y="184" width="9" height="9" fill="#8a7a5a"/>
 <rect x="840" y="206" width="84" height="3" fill="#120a06"/>
 <rect x="842" y="209" width="82" height="46" fill="#2c1a10"/>
 <rect x="858" y="214" width="24" height="30" fill="#3b2416"/><rect x="886" y="214" width="28" height="36" fill="#33201a"/>
 </g>
 <!-- hair -->
 <path d="M804 190c2-8 10-12 20-11 10 1 16 8 17 18l3 26c-2 4-6 6-10 6l-26 1c-4-2-6-6-6-10z" fill="#c9b58c"/>
 <path d="M806 190c2-6 6-9 12-10-6 12-8 30-6 48l-8 0c-2-12-2-26 2-38z" fill="#dccfa8"/>
 <path d="M836 196c3 8 5 18 6 28l-6 2c0-10-1-20-3-28z" fill="#a8946c"/>
 <!-- face -->
 <path d="M817 193c3-5 10-7 15-4 4 3 6 9 5 16-1 6-4 10-8 11-5 0-10-4-12-10-1-5-1-9 0-13z" fill="#d9a482"/>
 <path d="M816 192c4-6 12-8 18-4l-2 2c-5-2-10 0-14 4z" fill="#bfa87c"/>
 <path d="M823 199.500h4M831 199h4" stroke="#5a382a" stroke-width="1"/><path d="M828.500 202v4.500l2 .6" stroke="#b07a60" stroke-width=".8" fill="none"/><path d="M827 210.500c2 .8 4 .6 5.500-.2" stroke="#a8524a" stroke-width="1.100" fill="none"/>
 <!-- body -->
 <path d="M786 254c0-12 4-20 14-24l12-4c2-6 4-10 8-12l14 2c3 3 4 6 4 10 8 3 14 6 18 12l2 16z" fill="#0a0808"/>
 <path d="M818 214l18 2 2 10-20 2z" fill="#0d0a0a"/>
 <!-- hands -->
 <path d="M825 248c1-6 6-10 13-12l12-3c5-1 8 0 9 3l-1 4-7 2 4 2-2 4-10 3-8 1c-4 2-8 0-10-4z" fill="#cc956e"/>
 <path d="M872 233c3-2 7-1 10 1l7 6c3 3 4 7 3 10l-3 3-5-1-2-5-6-6c-3-2-5-5-4-8z" fill="#c68e68"/>
 <path d="M836 240l14-4M838 246l14-4M876 236l8 8" stroke="#9a6a4c" stroke-width=".9"/>
 <rect x="888" y="246" width="3" height="6" fill="#8a8a90"/>
</g></g>
<!-- overlay labels -->
<g font-family="Liberation Sans, sans-serif" font-weight="bold" fill="#fff" font-size="7.400">
 <text x="50.800" y="170.800" letter-spacing="-.02">MIX (50+)</text>
 <text x="347.500" y="247.700" letter-spacing="-.25">PLAYLIST (11)</text>
</g>
<g fill="none" stroke="#fff" stroke-width=".8"><circle cx="42.300" cy="167.800" r=".9" fill="#fff" stroke="none"/><path d="M40.600 165.800a2.800 2.800 0 0 0 0 4M44 165.800a2.800 2.800 0 0 1 0 4M39.300 164.800a4.400 4.400 0 0 0 0 6M45.300 164.800a4.400 4.400 0 0 1 0 6" stroke-width=".7"/></g>
<g fill="#fff"><rect x="336" y="242.700" width="6.600" height="1.200"/><rect x="336" y="244.900" width="6.600" height="1.200"/><rect x="336" y="247.100" width="4.400" height="1.200"/><path d="M341.400 246.600l2.900 1.500-2.900 1.500z"/></g>
<!-- progress -->
<rect x="21" y="260" width="915" height="2.200" fill="#e62117"/>
<!-- controls -->
<g transform="translate(-.5 -.6)"><path d="M41.300 272.200A5 5 0 1 0 41.800 276.400" fill="none" stroke="#fff" stroke-width="1.600"/><path d="M42.800 269.300v4.200h-4.200z" fill="#fff"/></g>
<path d="M57.400 272h2.600l3.600-3.400v11l-3.600-3.400h-2.600z" fill="#fff"/><path d="M65 270.800a3.800 3.800 0 0 1 0 6.600" fill="none" stroke="#fff" stroke-width="1.300"/><path d="M66.300 268.300a6.600 6.600 0 0 1 0 11.600" fill="none" stroke="#fff" stroke-width="1.300"/>
<text x="79.300" y="277.100" font-family="Liberation Sans, sans-serif" font-size="9.300" fill="#eee" letter-spacing="-.15">3:39 / 3:39</text>
<!-- gear -->
<g transform="translate(865.300 273.500)"><circle r="3.300" fill="none" stroke="#fff" stroke-width="2.200"/><g stroke="#fff" stroke-width="2"><path d="M0-5.400v2M0 5.400v-2M-5.400 0h2M5.400 0h-2M-3.800-3.800l1.400 1.400M3.800 3.800l-1.400-1.400M-3.800 3.800l1.400-1.400M3.800-3.800l-1.400 1.400"/></g></g>
<!-- youtube logo -->
<text x="882.500" y="277.600" font-family="Liberation Sans, sans-serif" font-weight="bold" font-size="9.500" fill="#fff" textLength="10.500" lengthAdjust="spacingAndGlyphs">You</text>
<rect x="893.500" y="268.800" width="14.200" height="10" rx="2.600" fill="#fff"/>
<text x="894.600" y="277.200" font-family="Liberation Sans, sans-serif" font-weight="bold" font-size="8.400" fill="#000" textLength="12" lengthAdjust="spacingAndGlyphs">Tube</text>
<!-- fullscreen -->
<path d="M919.500 271.600v-2.900h3M926.500 268.700h3v2.900M929.500 275.600v2.900h-3M922.500 278.500h-3v-2.900" fill="none" stroke="#fff" stroke-width="1.500"/>
</svg>
<!-- ===== buttons row ===== -->
<div class="abs btn" style="left:0;width:30px">pause</div>
<div class="abs btn" style="left:34px;width:43.500px">vol mute</div>
<div class="abs btn" style="left:81px;width:33px">vol up</div>
<div class="abs btn" style="left:118px;width:44.500px">vol down</div>
<div class="abs btn" style="left:851px;width:65px">Make Request</div>
<div class="abs btn" style="left:921px;width:39px">Log out</div>

<!-- ===== tabs ===== -->
<div class="abs tab" style="left:0;width:180.500px;background:#aaa">Chat</div>
<div class="abs tab" style="left:181px;width:182.500px">Invite Others</div>
<div class="abs tab" style="left:364px;width:183.500px">Donate</div>
<div class="abs tab" style="left:548px;width:183.500px">SoulSnap</div>
<div class="abs tab" style="left:732px;width:183.500px">Preferences</div>
<div class="abs tab" style="left:916px;width:44px;background:#999"></div>
<div class="abs" style="left:0;top:320px;width:960px;height:1px;background:#222;opacity:.5"></div>
<div class="abs" style="left:180.500px;top:320px;width:1px;height:32px;background:#242424"></div>
<div class="abs" style="left:363.500px;top:320px;width:1px;height:32px;background:#242424"></div>
<div class="abs" style="left:547.500px;top:320px;width:1px;height:32px;background:#242424"></div>
<div class="abs" style="left:731.500px;top:320px;width:1px;height:32px;background:#242424"></div>
<div class="abs" style="left:915.500px;top:320px;width:1px;height:32px;background:#242424"></div>

<svg class="abs" style="left:444px;top:286px" width="72" height="36" viewBox="444 286 72 36">
 <rect x="444.200" y="286.300" width="32.800" height="34.700" rx="1.500" fill="#8a8a8a"/>
 <rect x="447.800" y="288.600" width="25.400" height="31.600" fill="none" stroke="#fff" stroke-width="1.800"/>
 <path d="M449.800 290.600h21.400l-10.700 26.200z" fill="none" stroke="#fff" stroke-width="2"/>
 <rect x="480.800" y="286.300" width="32.900" height="34.700" rx="1.500" fill="#8a8a8a"/>
 <rect x="484.600" y="288.600" width="24.600" height="31.600" fill="none" stroke="#fff" stroke-width="1.800"/>
 <path d="M487.500 317.300h18.800l-9.400-26.300z" fill="none" stroke="#fff" stroke-width="2"/>
</svg>
<!-- ===== chat ===== -->
<style>
#chat{left:0;top:352px;width:780px;height:142px;background:#e7e4de;overflow:hidden}
.row{position:absolute;left:0;width:780px}
.row:after{content:'';position:absolute;left:0;bottom:0;width:780px;height:1px;background:repeating-linear-gradient(90deg,#8f8d82 0,#8f8d82 2.900px,transparent 2.900px,transparent 4.400px)}
.hd{position:absolute;left:23.600px;top:1.300px;font-size:7px;line-height:10px;white-space:pre;color:#bdbab4;letter-spacing:.08px}
.hd b{font-weight:normal;color:#2b8fc0}
.hd i{font-style:normal;color:#9a9894}
.bd{position:absolute;left:23.600px;top:11.600px;font-size:8.800px;line-height:9.900px;white-space:nowrap;color:#1e1e1e;letter-spacing:.05px}
.bd a{color:#2b8fc0;text-decoration:none}
.av{position:absolute;left:3px;top:2.400px;width:17px;height:16.600px;overflow:hidden}
</style>
<div id="chat" class="abs">
 <div class="row" style="top:-6.500px;height:22.700px;background:#e7e4de">
  <div class="av" style="background:#cdbfa8"><svg width="17" height="17" viewBox="0 0 17 17"><rect width="17" height="17" fill="#9a846a"/><ellipse cx="7.300" cy="8.200" rx="7.300" ry="6.500" fill="#d9cdb9"/><ellipse cx="7.300" cy="7.100" rx="5.400" ry="4.300" fill="#92704e"/><ellipse cx="6.800" cy="6.800" rx="3.200" ry="2.400" fill="#a8865f"/><path d="M12.700 10.900c2.700 0 4.300 3.200 1.100 4.900" fill="none" stroke="#cfc2ae" stroke-width="1.600"/><path d="M0 14c4.300 2.200 9.700 3.200 17 2.200v1h-17z" fill="#5e4a38"/></svg></div>
  <div class="hd"><b>@cano</b> <i>(23:34)</i> via Vidcast   Lang: en</div>
  <div class="bd">Good night</div>
 </div>
 <div class="row" style="top:16.200px;height:22.100px">
  <div class="av"><svg width="17" height="17" viewBox="0 0 17 17"><use href="#joan"/></svg></div>
  <div class="hd"><b>@joanna</b> <i>(23:35)</i> via Vidcast   Lang: en</div>
  <div class="bd">I don't want to close my browser window.</div>
 </div>
 <div class="row" style="top:38.300px;height:37.400px;background:#eef7ee">
  <div class="av"><svg width="17" height="17" viewBox="0 0 17 17"><rect width="17" height="17" fill="#37424e"/><ellipse cx="8.500" cy="8" rx="7" ry="7.600" fill="#56677a"/><path d="M4.200 17v-8l2.700-2.200h2.700l2.700 2.200v8z" fill="#15161c"/><path d="M7.400 7h1.900l.3 8.600h-2.500z" fill="#8c84c4"/><ellipse cx="8.300" cy="3.700" rx="1.800" ry="2.200" fill="#b98c74"/><path d="M6.400 2.900c.3-1.900 3.500-1.900 3.800 0-1.100-.5-2.700-.5-3.800 0z" fill="#2e221c"/><path d="M2 7.400l3.300 1.400M15 7.400l-3.300 1.400" stroke="#15161c" stroke-width="1.700"/><path d="M1.500 7.400h13.500" stroke="#c8301c" stroke-width=".5"/></svg></div>
  <div class="hd" style="top:4.900px"><b>@djscolam</b> <i>(23:35)</i> <span style="color:#e4f1e4">via Alpha   Lang: en</span></div>
  <div class="bd" style="top:16.800px;letter-spacing:-.052px">#NowPlaying End Theme – Zero 7 [<a>youtu.be</a>] Requested by: <a>@berg</a> #MondayNightDanceParty #BeExcellentToEachOther. //<a>@adnprinter</a> #adnprinter<br><span style="letter-spacing:-.57px">END OF LINE</span></div>
 </div>
 <div class="row" style="top:75.700px;height:22px">
  <div class="av"><svg width="17" height="17" viewBox="0 0 17 17"><use href="#joan"/></svg></div>
  <div class="hd"><b>@joanna</b> <i>(23:38)</i> via Vidcast   Lang: en</div>
  <div class="bd">Global won't refresh on Riposte.</div>
 </div>
 <div class="row" style="top:97.700px;height:22.400px;background:#efeeec">
  <div class="av"><svg width="17" height="17" viewBox="0 0 17 17"><rect width="17" height="17" fill="#b4bfce"/><path d="M0 17c0-4.400 2.700-6.500 8-6.500s9 2.100 9 6.500z" fill="#15151a"/><ellipse cx="7.900" cy="7.300" rx="3.700" ry="4.500" fill="#d2a48c"/><path d="M4.100 6c0-3.800 7.600-3.800 7.600 0-1.600-1.600-6-1.600-7.600 0z" fill="#8e8e8e"/><path d="M6.300 9.800c1.100.7 2.200.7 3.300 0" stroke="#8a5a4a" stroke-width=".6" fill="none"/></svg></div>
  <div class="hd"><b>@phoneboy</b> <i>(23:38)</i> <span style="color:#8e8c88">via Vidcast &nbsp; Lang: en</span></div>
  <div class="bd">Yup, looks like the API server has shut down.</div>
 </div>
 <div class="row" style="top:120.100px;height:22.300px">
  <div class="av"><svg width="17" height="17" viewBox="0 0 17 17"><use href="#joan"/></svg></div>
  <div class="hd"><b>@joanna</b> <i>(23:39)</i> via Vidcast   Lang: en</div>
  <div class="bd">Still have this channel. I don't want to close my browser!</div>
 </div>
</div>
<svg class="abs" style="left:0;top:0" width="0" height="0"><defs><g id="joan"><rect width="17" height="17" fill="#2a2a1e"/><rect x="0" y="0" width="5" height="11" fill="#4a5232"/><rect x="13" y="0" width="4" height="8" fill="#3a3a2a"/><path d="M2.500 17c-.5-8 .5-15.500 6-15.500s7 7 6 15.500z" fill="#2c1c16"/><ellipse cx="8.300" cy="8.500" rx="3.400" ry="4.300" fill="#b88a72"/><path d="M5 6.400c.6-3.400 6-3.400 6.800 0-2.200-1.100-4.400-1.100-6.800 0z" fill="#2c1c16"/><path d="M6.700 10.700c1.100.9 2.400.9 3.500 0" stroke="#ead8d0" stroke-width=".8" fill="none"/><path d="M3 17c1.100-2.200 2.800-3.300 5.300-3.300s4.200 1.100 5.300 3.300z" fill="#2a1a1a"/></g></defs></svg>
<!-- broadcast icon -->
<svg class="abs" style="left:154.400px;top:390.800px" width="19.500" height="13.800" viewBox="0 0 19.500 13.800"><rect width="19.500" height="13.800" rx="1" fill="#188a1c"/><circle cx="9.750" cy="6.600" r="1.900" fill="#fff"/><path d="M6.700 3.600a4.200 4.200 0 0 0 0 6M12.800 3.600a4.200 4.200 0 0 1 0 6" fill="none" stroke="#fff" stroke-width="1.400"/><path d="M4.600 1.900a6.600 6.600 0 0 0 0 9.400M14.900 1.900a6.600 6.600 0 0 1 0 9.400" fill="none" stroke="#fff" stroke-width="1.400"/></svg>
<!-- action icons in phoneboy row -->
<svg class="abs" style="left:715px;top:451px" width="62" height="10" viewBox="715 451 62 10"><path d="M723.600 453.200a3 3 0 1 1-2.600-.6" fill="none" stroke="#9a9a96" stroke-width=".8"/><path d="M737.400 453.600l3.400 3.600M740.800 453.600l-3.400 3.600" stroke="#8a8a86" stroke-width=".8"/><path d="M757.700 452l1.100 2.400 2.600.3-1.900 1.800.5 2.600-2.300-1.300-2.300 1.300.5-2.600-1.900-1.800 2.600-.3z" fill="#777"/><path d="M776.600 451.800l2.600 3.800-2.600 3.800-2.600-3.800z" fill="#8a8a86"/><g fill="#c8c6c0"><circle cx="730" cy="455.500" r=".6"/><circle cx="748" cy="455.500" r=".6"/><circle cx="768" cy="455.500" r=".6"/></g></svg>
<!-- chat scrollbar -->
<div class="abs" style="left:780px;top:352px;width:11.500px;height:142px;background:#f1f1f1"></div>
<div class="abs" style="left:781px;top:471.500px;width:8.800px;height:11.200px;background:#c1c1c1"></div>
<svg class="abs" style="left:780px;top:352px" width="12" height="142" viewBox="0 0 12 142"><path d="M3 8.500l2.800-3.200 2.800 3.200z" fill="#505050"/><path d="M3 134.500l2.800 3.200 2.800-3.200z" fill="#a3a3a3"/></svg>
<!-- ===== user list ===== -->
<style>
.un{position:absolute;left:823.500px;font-weight:bold;font-size:20.300px;line-height:24px;color:#bebab7;white-space:nowrap;letter-spacing:-.1px}
.nb{position:absolute;width:9.500px;height:13.400px;border-radius:2.800px;background:#fff;color:#3a3a3a;font-size:6px;line-height:13.400px;text-align:center}
</style>
<svg class="abs" style="left:791.500px;top:352px" width="157.500" height="142" viewBox="791.500 352 157.500 142">
 <defs><clipPath id="cu"><rect x="791.500" y="352" width="157.500" height="142"/></clipPath></defs>
 <g clip-path="url(#cu)">
 <!-- row 1 cano -->
 <rect x="791.500" y="352" width="157.500" height="31.800" fill="#2e2422"/>
 <g filter="url(#b2)">
  <rect x="823" y="352" width="60" height="32" fill="#2a1f20"/>
  <rect x="850" y="352" width="99" height="12" fill="#4a3c2c"/>
  <rect x="880" y="354" width="22" height="10" fill="#72727a"/><rect x="905" y="352" width="44" height="10" fill="#3e3226"/>
  <path d="M849 352l9 0 -6 30h-8z" fill="#1c1416"/>
  <path d="M868 352c6 6 14 12 22 20l-6 2c-6-8-14-14-22-20z" fill="#3a2c22"/>
  <rect x="884" y="373" width="65" height="5" fill="#6e6e78"/>
  <rect x="884" y="378" width="65" height="6" fill="#2a2222"/>
  <rect x="905" y="362" width="44" height="11" fill="#4a4038"/>
 </g>
 <rect x="791.500" y="352" width="31.500" height="31.800" fill="#9a846a"/>
 <g filter="url(#b1)"><ellipse cx="805" cy="367" rx="13.500" ry="12" fill="#d9cdb9"/><ellipse cx="805" cy="365" rx="10" ry="8" fill="#92704e"/><ellipse cx="804" cy="364.500" rx="6" ry="4.500" fill="#a8865f"/><ellipse cx="804.500" cy="364" rx="3" ry="2" fill="#92704e"/><path d="M815 372c5 0 8 6 2 9" fill="none" stroke="#cfc2ae" stroke-width="3"/><path d="M791.500 378c8 4 18 6 31 4v2h-31z" fill="#5e4a38"/></g>
 <!-- row 2 djscolam -->
 <rect x="791.500" y="383.800" width="157.500" height="31.600" fill="#1e1814"/>
 <g filter="url(#b2)">
  <rect x="823" y="384" width="54" height="22" fill="#5c4a32"/>
  <path d="M830 402l30-18h12l-30 20z" fill="#8e7650"/>
  <path d="M823 392l16-8h8l-24 14z" fill="#7a6444"/>
  <rect x="874" y="384" width="4" height="20" fill="#1a1410"/><ellipse cx="876" cy="386" rx="3.500" ry="3" fill="#2a201a"/>
  <rect x="880" y="384" width="30" height="18" fill="#76603e"/>
  <path d="M895 384l12 14" stroke="#3a2c1e" stroke-width="1.500"/>
  <path d="M911 396c2-8 10-12 20-12s14 4 16 10v6h-36z" fill="#5a1c14"/>
  <path d="M915 389c4-4 10-5 16-5 6 0 11 2 14 5" stroke="#b03a22" stroke-width="2.500" fill="none"/>
  <rect x="910" y="398" width="39" height="18" fill="#0c0a0a"/>
  <rect x="823" y="406" width="90" height="10" fill="#1a1410"/>
 </g>
 <rect x="791.500" y="383.800" width="31.500" height="31.600" fill="#37424e"/>
 <g filter="url(#b1)"><ellipse cx="807" cy="398" rx="13" ry="14" fill="#56677a"/><path d="M799 415.500v-15l5-4h5l5 4v15z" fill="#15161c"/><path d="M805 397h3.500l.5 16h-4.500z" fill="#8c84c4"/><ellipse cx="806.500" cy="390.500" rx="3.300" ry="4" fill="#b98c74"/><path d="M803 389c.6-3.500 6.400-3.500 7 0-2-1-5-1-7 0z" fill="#2e221c"/><path d="M795 397.500l6 2.500M819 397.500l-6 2.500" stroke="#15161c" stroke-width="3"/><path d="M794 397.500h25" stroke="#c8301c" stroke-width=".8"/><circle cx="796" cy="397.300" r="1.600" fill="#b98c74"/><circle cx="817.500" cy="397.300" r="1.600" fill="#b98c74"/><rect x="791.500" y="411" width="8" height="4.500" fill="#5a5a30"/></g>
 <!-- row 3 joanna -->
 <rect x="791.500" y="415.400" width="157.500" height="31" fill="#372f2b"/>
 <rect x="791.500" y="415.400" width="31.500" height="31" fill="#2a2a1e"/>
 <g filter="url(#b1)"><rect x="791.500" y="415.400" width="9" height="20" fill="#4a5232"/><rect x="815" y="415.400" width="8" height="14" fill="#3a3a2a"/><path d="M796 446.500c-1-14 1-28 10.500-28s12 12 10.500 28z" fill="#2c1c16"/><ellipse cx="806.500" cy="431" rx="6.200" ry="7.800" fill="#b88a72"/><path d="M800.500 427c1-6 11-6 12.500 0-4-2-8-2-12.500 0z" fill="#2c1c16"/><path d="M802 429.500h4M807.500 429.500h4" stroke="#5a4038" stroke-width=".8"/><path d="M803.500 435c2 1.600 4.500 1.600 6.500 0" stroke="#ead8d0" stroke-width="1.200" fill="none"/><path d="M797 446.500c2-4 5-6 9.500-6s7.500 2 9.500 6z" fill="#2a1a1a"/></g>
 <!-- row 4 phoneboy -->
 <rect x="791.500" y="446.400" width="157.500" height="31.600" fill="#191b26"/>
 <g filter="url(#b2)"><rect x="824" y="447" width="36" height="18" fill="#20222c"/><rect x="867" y="447" width="14" height="28" fill="#1b2a52"/><rect x="892" y="447" width="15" height="28" fill="#1c2e58"/><rect x="911" y="447" width="11" height="28" fill="#1a2648"/><rect x="926" y="447" width="22" height="30" fill="#15161c"/><rect x="868.500" y="449" width="4" height="3.500" fill="#7888b8"/><rect x="912.500" y="449" width="4" height="3.500" fill="#7888b8"/></g>
 <rect x="791.500" y="446.400" width="31.500" height="31.600" fill="#aab6c6"/>
 <g filter="url(#b1)"><path d="M791.500 478c0-8 5-12 15-12s16 4 16 12z" fill="#15151a"/><ellipse cx="806" cy="460" rx="6.800" ry="8.200" fill="#d2a48c"/><path d="M799 457.500c0-7 14-7 14 0-3-3-11-3-14 0z" fill="#8e8e8e"/><path d="M803 464.500c2 1.200 4 1.200 6 0" stroke="#8a5a4a" stroke-width="1" fill="none"/><path d="M802 459h2.500M807.500 459h2.500" stroke="#5a4038" stroke-width=".8"/></g>
 <!-- row 5 -->
 <rect x="791.500" y="478" width="157.500" height="17" fill="#4c4c4c"/>
 <rect x="791.500" y="478" width="31.500" height="17" fill="#c4c4c4"/>
 <g filter="url(#b1)"><path d="M797 494c1-5 3-10 8-12l4-3 3 2 6-1-2 5 4 3-3 3 1 3z" fill="#101010"/><path d="M799 483l5 3M813 480l5 2M818 488l4 1" stroke="#101010" stroke-width="2"/></g>
 </g>
</svg>
<div class="un" style="top:361.500px">CANO</div>
<div class="un" style="top:392.700px">DJSCOLAM</div>
<div class="un" style="top:423.700px">JOANNA</div>
<div class="un" style="top:455px">PHONEBOY</div>
<div class="abs" style="left:823.500px;top:486px;width:124px;height:8px;overflow:hidden"><div class="un" style="left:0;top:0">DANTI</div></div>
<div class="nb" style="left:923.500px;top:360.800px">&lt;</div><div class="nb" style="left:936.500px;top:360.800px">&gt;</div>
<div class="nb" style="left:923.500px;top:423.400px">&lt;</div><div class="nb" style="left:936.500px;top:423.400px">&gt;</div>
<!-- users scrollbar -->
<div class="abs" style="left:949px;top:352px;width:11px;height:142px;background:#f1f1f1"></div>
<div class="abs" style="left:951.500px;top:363.500px;width:7px;height:99px;background:#c1c1c1"></div>
<svg class="abs" style="left:949px;top:352px" width="11" height="142" viewBox="0 0 11 142"><path d="M2.800 8.500l2.800-3.200 2.800 3.200z" fill="#a3a3a3"/><path d="M2.800 134.500l2.800 3.200 2.800-3.200z" fill="#000"/></svg>
<!-- ===== new post row ===== -->
<div class="abs" style="left:-2px;top:496px;font-size:10.600px;line-height:15px;color:#6c6c6c;white-space:nowrap;letter-spacing:0">New Post</div>
<div class="abs" style="left:46px;top:495px;width:730px;height:17.500px;background:#fff;border:1.500px solid #4a7fd0;border-radius:1px;box-shadow:0 0 1.500px #6a9ae0"></div>
<div class="abs" style="left:49px;top:498px;width:1px;height:12px;background:#333"></div>
<div class="abs" style="left:778px;top:496.300px;font-size:10.600px;line-height:15px;color:#7a7a7a;white-space:nowrap;letter-spacing:.55px">256 Global</div>
<svg class="abs" style="left:851px;top:501px" width="8" height="6" viewBox="0 0 8 6"><path d="M.6 .2h6.400l-3.200 5.600z" fill="#1a9fd8"/></svg>
<div class="abs" style="left:873.500px;top:497px;width:30.500px;height:13.500px;border:1px solid #a8a8a8;background:linear-gradient(#f8f8f8,#dcdcdc);font-size:9.200px;line-height:11.500px;text-align:center;color:#111">Send</div>
<div class="abs" style="left:908.300px;top:497px;width:50px;height:13.500px;border:1px solid #a8a8a8;background:linear-gradient(#f8f8f8,#dcdcdc);font-size:9.200px;line-height:11.500px;text-align:center;color:#111">Broadcast</div>
<!-- ===== footer ===== -->
<div class="abs" style="left:7.500px;top:529.500px;font-size:8.400px;line-height:11px;color:#1b8fcb;white-space:nowrap;letter-spacing:0">Preferences</div>
<div class="abs" style="left:66px;top:530px;font-size:8.200px;line-height:11px;color:#2aa0dc;white-space:nowrap;letter-spacing:-.02px">Other links...</div>
<svg class="abs" style="left:129.500px;top:534px" width="5" height="4" viewBox="0 0 5 4"><path d="M0 0h4.600l-2.300 3.800z" fill="#2aa0dc"/></svg>
<div class="abs" style="left:149px;top:529.500px;font-size:8.400px;line-height:11px;color:#1b8fcb;white-space:nowrap;letter-spacing:.24px">Log Out</div>
<div class="abs" style="left:884.300px;top:531.500px;font-size:11.600px;line-height:15px;color:#1b8fcb;white-space:nowrap;letter-spacing:-.17px">Join Hashtag</div>
<div class="abs" style="left:950.500px;top:524.500px;width:6.500px;height:10.500px;border-radius:1.500px;background:#ea6a6a;color:#fff;font-size:8.500px;line-height:10.500px;text-align:center;font-weight:bold">3</div>
</div>
</body>
</html>
